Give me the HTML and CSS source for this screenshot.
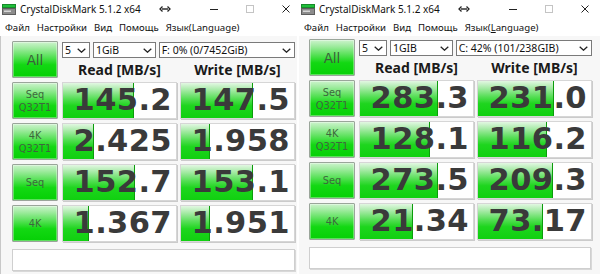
FILE: index.html
```html
<!DOCTYPE html>
<html lang="ru">
<head>
<meta charset="utf-8">
<title>CrystalDiskMark</title>
<link rel="stylesheet" href="styles.css">
</head>
<body>
<div class="screen">
  <div class="win win-left">
    <div class="titlebar">
      <svg class="appicon" width="14" height="11" viewBox="0 0 14 11"><rect x="0.5" y="0.5" width="13" height="3" fill="#1fbf3a" stroke="#178a2a" stroke-width="1"/><rect x="0.5" y="4.5" width="13" height="6" fill="#8c8c8c" stroke="#5e5e5e" stroke-width="1"/><rect x="2" y="6.5" width="7" height="1.5" fill="#d8d8d8"/></svg>
      <span class="title">CrystalDiskMark 5.1.2 x64</span>
      <svg class="ctl ctl-swap" width="14" height="8" viewBox="0 0 14 8"><path d="M4 4H10" stroke="#222" stroke-width="1.4"/><path d="M4.5 1.5L2 4L4.5 6.5M9.5 1.5L12 4L9.5 6.5" fill="none" stroke="#222" stroke-width="1.3"/></svg>
      <svg class="ctl ctl-min" width="14" height="8" viewBox="0 0 14 8"><path d="M3 4.5H11" stroke="#222" stroke-width="1"/></svg>
      <svg class="ctl ctl-max" width="14" height="8" viewBox="0 0 14 8"><rect x="3.5" y="0.5" width="7" height="7" fill="none" stroke="#c4c4c4" stroke-width="1"/></svg>
      <svg class="ctl ctl-close" width="14" height="8" viewBox="0 0 14 8"><path d="M3.5 0.5L10.5 7.5M10.5 0.5L3.5 7.5" stroke="#222" stroke-width="1"/></svg>
    </div>
    <div class="menubar">
      <span>Файл</span><span>Настройки</span><span>Вид</span><span>Помощь</span><span>Язык(Language)</span>
    </div>
    <div class="client">
      <div class="grid">
        <div class="btn btn-all">All</div>
        <div class="top">
          <div class="selects">
            <div class="sel sel-count"><span>5</span><svg class="chev" width="9" height="5" viewBox="0 0 9 5"><path d="M0.7 0.7L4.5 4.2L8.3 0.7" fill="none" stroke="#222" stroke-width="1.3"/></svg></div>
            <div class="sel sel-size"><span>1GiB</span><svg class="chev" width="9" height="5" viewBox="0 0 9 5"><path d="M0.7 0.7L4.5 4.2L8.3 0.7" fill="none" stroke="#222" stroke-width="1.3"/></svg></div>
            <div class="sel sel-drive"><span>F: 0% (0/7452GiB)</span><svg class="chev" width="9" height="5" viewBox="0 0 9 5"><path d="M0.7 0.7L4.5 4.2L8.3 0.7" fill="none" stroke="#222" stroke-width="1.3"/></svg></div>
          </div>
          <div class="heads"><div>Read [MB/s]</div><div>Write [MB/s]</div></div>
        </div>

        <div class="btn btn-test"><span>Seq</span><span>Q32T1</span></div>
        <div class="val"><div class="meter" style="width:63.2%"></div><span class="num">145.2</span></div>
        <div class="val"><div class="meter" style="width:63.4%"></div><span class="num">147.5</span></div>

        <div class="btn btn-test"><span>4K</span><span>Q32T1</span></div>
        <div class="val"><div class="meter" style="width:27.7%"></div><span class="num">2.425</span></div>
        <div class="val"><div class="meter" style="width:25.8%"></div><span class="num">1.958</span></div>

        <div class="btn btn-test"><span>Seq</span></div>
        <div class="val"><div class="meter" style="width:63.7%"></div><span class="num">152.7</span></div>
        <div class="val"><div class="meter" style="width:63.7%"></div><span class="num">153.1</span></div>

        <div class="btn btn-test"><span>4K</span></div>
        <div class="val"><div class="meter" style="width:22.7%"></div><span class="num">1.367</span></div>
        <div class="val"><div class="meter" style="width:25.8%"></div><span class="num">1.951</span></div>
      </div>
      <div class="comment"></div>
    </div>
  </div>

  <div class="win win-right">
    <div class="titlebar">
      <svg class="appicon" width="14" height="11" viewBox="0 0 14 11"><rect x="0.5" y="0.5" width="13" height="3" fill="#1fbf3a" stroke="#178a2a" stroke-width="1"/><rect x="0.5" y="4.5" width="13" height="6" fill="#8c8c8c" stroke="#5e5e5e" stroke-width="1"/><rect x="2" y="6.5" width="7" height="1.5" fill="#d8d8d8"/></svg>
      <span class="title">CrystalDiskMark 5.1.2 x64</span>
      <svg class="ctl ctl-swap" width="14" height="8" viewBox="0 0 14 8"><path d="M4 4H10" stroke="#222" stroke-width="1.4"/><path d="M4.5 1.5L2 4L4.5 6.5M9.5 1.5L12 4L9.5 6.5" fill="none" stroke="#222" stroke-width="1.3"/></svg>
      <svg class="ctl ctl-min" width="14" height="8" viewBox="0 0 14 8"><path d="M3 4.5H11" stroke="#222" stroke-width="1"/></svg>
      <svg class="ctl ctl-max" width="14" height="8" viewBox="0 0 14 8"><rect x="3.5" y="0.5" width="7" height="7" fill="none" stroke="#c4c4c4" stroke-width="1"/></svg>
      <svg class="ctl ctl-close" width="14" height="8" viewBox="0 0 14 8"><path d="M3.5 0.5L10.5 7.5M10.5 0.5L3.5 7.5" stroke="#222" stroke-width="1"/></svg>
    </div>
    <div class="menubar">
      <span>Файл</span><span>Настройки</span><span>Вид</span><span>Помощь</span><span>Язык(<u>L</u>anguage)</span>
    </div>
    <div class="client">
      <div class="grid">
        <div class="btn btn-all">All</div>
        <div class="top">
          <div class="selects">
            <div class="sel sel-count"><span>5</span><svg class="chev" width="9" height="5" viewBox="0 0 9 5"><path d="M0.7 0.7L4.5 4.2L8.3 0.7" fill="none" stroke="#222" stroke-width="1.3"/></svg></div>
            <div class="sel sel-size"><span>1GIB</span><svg class="chev" width="9" height="5" viewBox="0 0 9 5"><path d="M0.7 0.7L4.5 4.2L8.3 0.7" fill="none" stroke="#222" stroke-width="1.3"/></svg></div>
            <div class="sel sel-drive"><span>C: 42% (101/238GIB)</span><svg class="chev" width="9" height="5" viewBox="0 0 9 5"><path d="M0.7 0.7L4.5 4.2L8.3 0.7" fill="none" stroke="#222" stroke-width="1.3"/></svg></div>
          </div>
          <div class="heads"><div>Read [MB/s]</div><div>Write [MB/s]</div></div>
        </div>

        <div class="btn btn-test"><span>Seq</span><span>Q32T1</span></div>
        <div class="val"><div class="meter" style="width:69.0%"></div><span class="num">283.3</span></div>
        <div class="val"><div class="meter" style="width:67.3%"></div><span class="num">231.0</span></div>

        <div class="btn btn-test"><span>4K</span><span>Q32T1</span></div>
        <div class="val"><div class="meter" style="width:62.2%"></div><span class="num">128.1</span></div>
        <div class="val"><div class="meter" style="width:61.3%"></div><span class="num">116.2</span></div>

        <div class="btn btn-test"><span>Seq</span></div>
        <div class="val"><div class="meter" style="width:68.7%"></div><span class="num">273.5</span></div>
        <div class="val"><div class="meter" style="width:66.4%"></div><span class="num">209.3</span></div>

        <div class="btn btn-test"><span>4K</span></div>
        <div class="val"><div class="meter" style="width:46.6%"></div><span class="num">21.34</span></div>
        <div class="val"><div class="meter" style="width:57.3%"></div><span class="num">73.17</span></div>
      </div>
      <div class="comment"></div>
    </div>
  </div>
</div>
</body>
</html>
```
FILE: styles.css
```css
* { box-sizing: border-box; }
html, body { margin: 0; padding: 0; background: #ffffff; }
body { width: 600px; height: 274px; overflow: hidden; font-family: "Noto Sans", "Open Sans", sans-serif; color: #1a1a1a; }

.screen { display: flex; gap: 2px; width: 600px; height: 274px; }
.win { display: flex; flex-direction: column; height: 274px; background: #ffffff; }
.win-left { width: 297px; }
.win-right { width: 301px; }

.titlebar { display: flex; align-items: center; height: 18px; padding: 0 4px 0 2px; background: #ffffff; }
.win-right .titlebar { padding-right: 8px; }
.appicon { flex: none; margin-top: 1px; }
.title { margin-left: 4px; font-size: 10px; color: #111; white-space: nowrap; }
.ctl { flex: none; }
.ctl-swap { margin-left: auto; }
.ctl-min { margin-left: 35px; }
.ctl-max { margin-left: 22px; }
.ctl-close { margin-left: 22px; }

.menubar { display: flex; align-items: center; height: 18px; padding-left: 5px; gap: 7px; font-size: 9.6px; color: #111; background: #ffffff; }
.menubar u { text-decoration: underline; }

.client { flex: 1; padding: 5px 0 0 11px; background: #f7f7f7; border-left: 1px solid #c8c8c8; }
.win-right .client { padding: 3px 0 0 10px; border-left: none; }

.grid { display: grid; grid-template-columns: 47px 115px 115px; grid-template-rows: 37px repeat(4, 37px); column-gap: 3px; row-gap: 4px; }

.btn { width: 46px; border: 1px solid #9aa59a; border-radius: 1px; background: linear-gradient(to bottom, #cdf3cd 0%, #9eeb9e 18%, #4fe04f 45%, #13d813 65%, #06d006 100%); box-shadow: inset 0 0 0 1px rgba(255,255,255,0.35); display: flex; flex-direction: column; align-items: center; justify-content: center; font-family: "DejaVu Sans", Verdana, sans-serif; color: #3d673d; }
.btn-all { font-size: 13.5px; color: #3a5f3a; }
.btn-test { font-size: 9.8px; line-height: 13px; }

.top { grid-column: 2 / span 2; display: flex; flex-direction: column; }
.selects { display: flex; gap: 3px; margin-top: 1px; height: 16px; }
.sel { display: flex; align-items: center; justify-content: space-between; height: 16px; padding: 0 3px 0 2px; background: #ffffff; border: 1px solid #7a7a7a; font-size: 10.5px; color: #111; }
.sel-count { width: 28px; }
.sel-size { width: 63px; }
.sel-drive { width: 137px; }
.heads { display: grid; grid-template-columns: 115px 115px; column-gap: 3px; margin-top: 3px; }
.heads div { text-align: center; font-weight: 700; font-size: 14px; line-height: 17px; color: #1a1a1a; }

.val { position: relative; display: flex; align-items: center; justify-content: flex-end; padding-right: 4px; background: #ffffff; border: 1px solid #d6d6d6; box-shadow: 1px 1px 0 #cbcbcb; overflow: hidden; }
.meter { position: absolute; left: 0; top: 0; bottom: 0; border-right: 1px solid #0c9c0c; background: linear-gradient(to bottom, #e2f7e2 0%, #a6eaa6 20%, #55de55 45%, #1ed51e 65%, #10d010 100%); }
.num { position: relative; font-family: "DejaVu Sans", Verdana, sans-serif; font-weight: 700; font-size: 30.5px; line-height: 1; letter-spacing: 0.4px; color: #3a3a3a; }

.comment { width: 283px; height: 22px; margin-top: 7px; background: #ffffff; border: 1px solid #cfcfcf; box-shadow: 1px 1px 0 #d8d8d8; }
.win-right .comment { width: 282px; }
```
